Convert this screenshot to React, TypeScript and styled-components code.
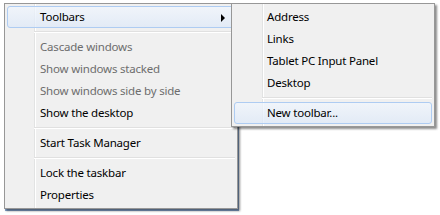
import styled, { createGlobalStyle } from "styled-components";

const Global = createGlobalStyle`
  html, body {
    margin: 0;
    background: #ffffff;
  }
  body {
    font-family: "Segoe UI", "Noto Sans", "Open Sans", sans-serif;
    font-size: 11.5px;
    letter-spacing: -0.2px;
  }
`;

const Stage = styled.div`
  position: relative;
  width: 440px;
  height: 215px;
  padding: 3px 0 0 4px;
  box-sizing: border-box;
  overflow: hidden;
`;

const Menu = styled.div<{ $gutter: number }>`
  box-sizing: border-box;
  display: flex;
  flex-direction: column;
  padding: 2px;
  border: 1px solid #979797;
  background-color: #f0f0f0;
  background-image: linear-gradient(
    to right,
    transparent ${(p) => p.$gutter}px,
    #e2e3e3 ${(p) => p.$gutter}px,
    #e2e3e3 ${(p) => p.$gutter + 1}px,
    #ffffff ${(p) => p.$gutter + 1}px,
    #ffffff ${(p) => p.$gutter + 2}px,
    transparent ${(p) => p.$gutter + 2}px
  );
  box-shadow: 2px 2px 2px rgba(0, 0, 0, 0.45);
`;

const MainMenu = styled(Menu)`
  width: 234px;
  box-shadow: 2px 2px 2px rgba(0, 0, 0, 0.45), 1px 2px 0 #8aa9d2;
`;

const SubMenu = styled(Menu)`
  position: absolute;
  top: 3px;
  left: 231px;
  width: 204px;
`;

const Item = styled.div<{ $disabled?: boolean; $hot?: boolean }>`
  position: relative;
  box-sizing: border-box;
  height: 22px;
  display: flex;
  align-items: center;
  padding-left: 32px;
  padding-bottom: 1px;
  border: 1px solid transparent;
  border-radius: 3px;
  color: ${(p) => (p.$disabled ? "#6d6d6d" : "#000000")};
  white-space: nowrap;
  ${(p) =>
    p.$hot &&
    `
    border-color: #aeccf2;
    background: linear-gradient(to bottom, rgba(240,246,253,0.75), rgba(222,233,248,0.75));
  `}
`;

const Separator = styled.div<{ $indent: number }>`
  height: 8px;
  display: flex;
  align-items: center;
  padding-left: ${(p) => p.$indent}px;

  &::after {
    content: "";
    flex: 1;
    height: 1px;
    border-bottom: 1px solid #ffffff;
    background: #e0e0e0;
  }
`;

const Arrow = styled.span`
  position: absolute;
  right: 9px;
  top: 7px;
  width: 0;
  height: 0;
  border-top: 4px solid transparent;
  border-bottom: 4px solid transparent;
  border-left: 4px solid #000000;
`;

export default function App() {
  return (
    <>
      <Global />
      <Stage>
        <MainMenu $gutter={29}>
          <Item $hot>
            Toolbars
            <Arrow />
          </Item>
          <Separator $indent={27} />
          <Item $disabled>Cascade windows</Item>
          <Item $disabled>Show windows stacked</Item>
          <Item $disabled>Show windows side by side</Item>
          <Item>Show the desktop</Item>
          <Separator $indent={27} />
          <Item>Start Task Manager</Item>
          <Separator $indent={27} />
          <Item>Lock the taskbar</Item>
          <Item>Properties</Item>
        </MainMenu>
        <SubMenu $gutter={30}>
          <Item>Address</Item>
          <Item>Links</Item>
          <Item>Tablet PC Input Panel</Item>
          <Item>Desktop</Item>
          <Separator $indent={28} />
          <Item $hot>New toolbar...</Item>
        </SubMenu>
      </Stage>
    </>
  );
}
